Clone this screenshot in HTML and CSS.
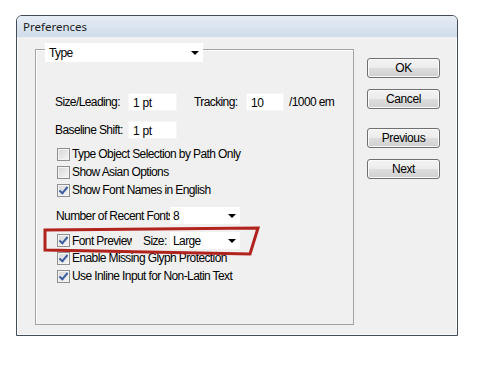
FILE: index.html
```html
<!DOCTYPE html>
<html lang="en">
<head>
    <meta charset="UTF-8">
    <title>Preferences</title>
    <link rel="stylesheet" href="styles.css">
</head>
<body>
<div class="page">
    <div class="window">
        <div class="titlebar">Preferences</div>
        <div class="client">
            <div class="group">
                <div class="select select-type"><span>Type</span><i class="arrow"></i></div>

                <div class="row row-size">
                    <span class="label label-wide">Size/Leading:</span>
                    <span class="field field-pt">1 pt</span>
                    <span class="label label-tracking">Tracking:</span>
                    <span class="field field-track">10</span>
                    <span class="label unit">/1000 em</span>
                </div>
                <div class="row row-shift">
                    <span class="label label-wide">Baseline Shift:</span>
                    <span class="field field-pt">1 pt</span>
                </div>

                <div class="checks checks-top">
                    <div class="check-row"><i class="box"></i><span>Type Object Selection by Path Only</span></div>
                    <div class="check-row"><i class="box"></i><span>Show Asian Options</span></div>
                    <div class="check-row"><i class="box checked"></i><span>Show Font Names in English</span></div>
                </div>

                <div class="row row-recent">
                    <span class="label label-recent">Number of Recent Fonts</span>
                    <div class="select select-small"><span>8</span><i class="arrow"></i></div>
                </div>
                <div class="row row-preview">
                    <i class="box checked"></i>
                    <span class="label label-preview">Font Preview</span>
                    <span class="label label-size">Size:</span>
                    <div class="select select-small"><span>Large</span><i class="arrow"></i></div>
                </div>

                <div class="checks">
                    <div class="check-row"><i class="box checked"></i><span>Enable Missing Glyph Protection</span></div>
                    <div class="check-row"><i class="box checked"></i><span>Use Inline Input for Non-Latin Text</span></div>
                </div>
            </div>

            <div class="buttons">
                <div class="btn">OK</div>
                <div class="btn">Cancel</div>
                <div class="btn btn-gap">Previous</div>
                <div class="btn">Next</div>
            </div>
        </div>
    </div>

    <!-- hand-drawn highlight around the Font Preview row -->
    <svg class="markup" width="494" height="366" viewBox="0 0 494 366">
        <polygon points="45,230 258,228 250,254 45,250" fill="none" stroke="#b1231d" stroke-width="3" stroke-linejoin="miter"/>
    </svg>
</div>
</body>
</html>
```

FILE: styles.css
```css
body {
    margin: 0;
    background-color: #fff;
    font-family: 'Liberation Sans', Arial, sans-serif;
    font-size: 12px;
    color: #000;
}
.page {
    position: relative;
    width: 494px;
    height: 366px;
    padding-top: 15px;
    box-sizing: border-box;
}
.window {
    margin-left: 16px;
    width: 442px;
    height: 321px;
    box-sizing: border-box;
    border: 1px solid #434d58;
    border-radius: 6px 6px 0 0;
    background-color: #f0f0f0;
    box-shadow: inset 0 0 0 1px #fbfcfd;
    overflow: hidden;
}
.titlebar {
    height: 21px;
    padding-left: 6px;
    line-height: 22px;
    font-family: 'Noto Sans', 'Open Sans', sans-serif;
    font-size: 11.5px;
    color: #1c1c1c;
    background: linear-gradient(#e6edf5, #cfdcea);
}
.client {
    display: flex;
    padding: 12px 0 0 18px;
}
.group {
    width: 319px;
    height: 276px;
    box-sizing: border-box;
    border: 1px solid #a3a3a3;
    box-shadow: inset 1px 1px 0 #fff;
}
.select {
    display: flex;
    align-items: center;
    justify-content: space-between;
    box-sizing: border-box;
    background-color: #fff;
    padding: 0 4px 0 4px;
    letter-spacing: -0.6px;
}
.select-type {
    margin: -7px 0 0 9px;
    width: 158px;
    height: 19px;
}
.select-small {
    width: 70px;
    height: 17px;
    padding-left: 3px;
}
.arrow {
    width: 0;
    height: 0;
    border-left: 4px solid transparent;
    border-right: 4px solid transparent;
    border-top: 4px solid #000;
    margin-top: 1px;
}
.row {
    display: flex;
    align-items: center;
    padding-left: 19px;
}
.label {
    white-space: nowrap;
    letter-spacing: -0.6px;
}
.row-size {
    margin-top: 31px;
    height: 18px;
}
.row-shift {
    margin-top: 10px;
    height: 18px;
}
.label-wide {
    width: 73px;
}
.field {
    box-sizing: border-box;
    height: 18px;
    line-height: 18px;
    padding-left: 4px;
    background-color: #fff;
    border: 1px solid #f6f6f6;
    letter-spacing: -0.3px;
}
.field-pt {
    width: 49px;
}
.label-tracking {
    margin-left: 17px;
    width: 52px;
}
.field-track {
    width: 38px;
}
.unit {
    margin-left: 5px;
}
.checks {
    padding-left: 21px;
}
.checks-top {
    margin-top: 6px;
}
.check-row {
    display: flex;
    align-items: center;
    height: 18px;
    letter-spacing: -0.6px;
    white-space: nowrap;
}
.box {
    position: relative;
    flex: none;
    width: 13px;
    height: 13px;
    box-sizing: border-box;
    margin-right: 2px;
    border: 1px solid #8e8f8f;
    background: linear-gradient(135deg, #d6d6d6, #f6f6f6);
    box-shadow: inset 0 0 0 1px #f4f4f4;
}
.box.checked::after {
    content: "";
    position: absolute;
    left: 3px;
    top: 0;
    width: 3px;
    height: 7px;
    border-right: 2px solid #3d5ea0;
    border-bottom: 2px solid #3d5ea0;
    transform: rotate(40deg);
}
.row-recent {
    margin-top: 8px;
    height: 17px;
    padding-left: 20px;
}
.label-recent {
    width: 114px;
    overflow: hidden;
}
.row-preview {
    margin-top: 8px;
    height: 17px;
    padding-left: 21px;
}
.label-preview {
    width: 60px;
    overflow: hidden;
}
.label-size {
    margin-left: 11px;
    width: 27px;
}
.buttons {
    display: flex;
    flex-direction: column;
    gap: 11px;
    margin: 9px 0 0 13px;
}
.btn {
    width: 73px;
    height: 20px;
    box-sizing: border-box;
    border: 1px solid #707070;
    border-radius: 3px;
    background: linear-gradient(#f3f3f3 0%, #ececec 48%, #dddddd 52%, #d0d0d0 100%);
    box-shadow: inset 0 0 0 1px #fafafa;
    text-align: center;
    line-height: 18px;
    letter-spacing: -0.4px;
}
.btn-gap {
    margin-top: 8px;
}
.markup {
    position: absolute;
    left: 0;
    top: 0;
    pointer-events: none;
}
```
